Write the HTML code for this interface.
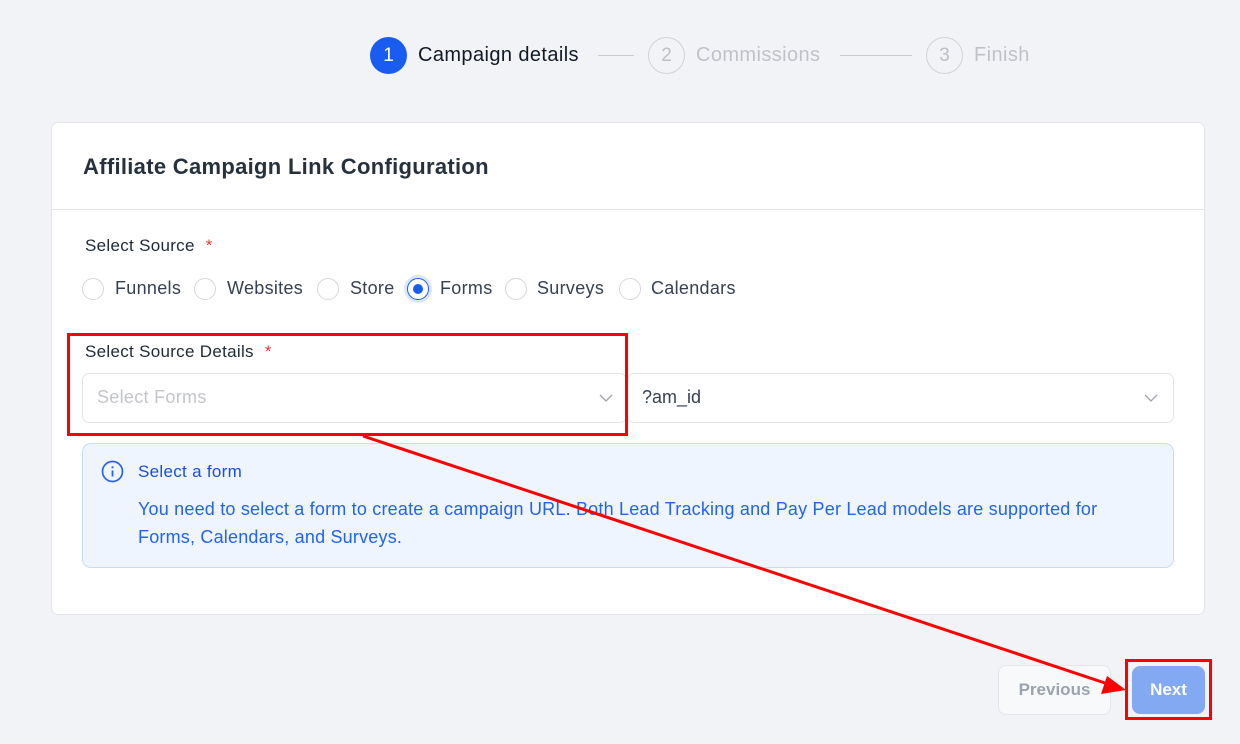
<!DOCTYPE html>
<html><head><style>
*{margin:0;padding:0;box-sizing:border-box}
body{width:1240px;height:744px;background:#f2f3f7;font-family:"Liberation Sans",sans-serif;position:relative;overflow:hidden}
.a{position:absolute;white-space:nowrap}
.circ{position:absolute;width:37px;height:37px;border-radius:50%;display:flex;align-items:center;justify-content:center;font-size:19px}
.rad{position:absolute;width:22px;height:22px;border-radius:50%;border:1px solid #d4d7dd;background:#fff;top:278px}
.rt{position:absolute;top:278px;font-size:18px;color:#374151;letter-spacing:0.3px}
.st{font-size:20px;letter-spacing:0.4px}
</style></head><body>
<div class="circ" style="left:370px;top:37px;background:#1a5cf0;color:#fff">1</div>
<div class="a st" style="left:418px;top:44px;color:#111827">Campaign details</div>
<div class="a" style="left:598px;top:55px;width:36px;height:1px;background:#c8cbd0"></div>
<div class="circ" style="left:648px;top:37px;border:1.5px solid #d0d2d6;color:#bdbfc4">2</div>
<div class="a st" style="left:696px;top:44px;color:#c0c2c7">Commissions</div>
<div class="a" style="left:840px;top:55px;width:72px;height:1px;background:#c8cbd0"></div>
<div class="circ" style="left:926px;top:37px;border:1.5px solid #d0d2d6;color:#bdbfc4">3</div>
<div class="a st" style="left:974px;top:44px;color:#c0c2c7">Finish</div>

<div class="a" style="left:51px;top:122px;width:1154px;height:493px;background:#fff;border:1px solid #e3e5e9;border-radius:7px"></div>
<div class="a" style="left:52px;top:209px;width:1152px;height:1px;background:#e5e7eb"></div>
<div class="a" style="left:83px;top:154px;font-size:22px;font-weight:bold;color:#27313d;letter-spacing:0.3px">Affiliate Campaign Link Configuration</div>

<div class="a" style="left:85px;top:236px;font-size:17px;color:#1f2937;letter-spacing:0.3px">Select Source <span style="color:#e53935;margin-left:6px">*</span></div>
<div class="rad" style="left:82px"></div><div class="rt" style="left:115px">Funnels</div>
<div class="rad" style="left:194px"></div><div class="rt" style="left:227px">Websites</div>
<div class="rad" style="left:317px"></div><div class="rt" style="left:350px">Store</div>
<div class="rad" style="left:407px;border:1.5px solid #1a5cf0;box-shadow:0 0 0 3px #dbe7fd"><div style="position:absolute;left:4.5px;top:4.5px;width:10px;height:10px;border-radius:50%;background:#1a5cf0"></div></div><div class="rt" style="left:440px">Forms</div>
<div class="rad" style="left:505px"></div><div class="rt" style="left:537px">Surveys</div>
<div class="rad" style="left:619px"></div><div class="rt" style="left:651px">Calendars</div>

<div class="a" style="left:85px;top:342px;font-size:17px;color:#1f2937;letter-spacing:0.3px">Select Source Details <span style="color:#e53935;margin-left:6px">*</span></div>
<div class="a" style="left:82px;top:373px;width:545px;height:50px;border:1px solid #e3e5e9;border-radius:7px;background:#fff"></div>
<div class="a" style="left:97px;top:387px;font-size:18px;color:#c3c5ca;letter-spacing:0.3px">Select Forms</div>
<svg class="a" style="left:598px;top:392px" width="16" height="12"><path d="M2 3l6 6 6-6" fill="none" stroke="#9ca3af" stroke-width="1.3"/></svg>
<div class="a" style="left:627px;top:373px;width:547px;height:50px;border:1px solid #e3e5e9;border-radius:7px;background:#fff"></div>
<div class="a" style="left:642px;top:387px;font-size:18px;color:#374151">?am_id</div>
<svg class="a" style="left:1143px;top:392px" width="16" height="12"><path d="M2 3l6 6 6-6" fill="none" stroke="#9ca3af" stroke-width="1.3"/></svg>

<div class="a" style="left:82px;top:443px;width:1092px;height:125px;background:#eef5fe;border:1px solid #c6dcfb;border-radius:9px"></div>
<svg class="a" style="left:101px;top:460px" width="23" height="23"><circle cx="11.5" cy="11.5" r="10" fill="none" stroke="#2563eb" stroke-width="1.7"/><path d="M11.5 10.5v6" stroke="#2563eb" stroke-width="1.8"/><circle cx="11.5" cy="7.3" r="1.1" fill="#2563eb"/></svg>
<div class="a" style="left:138px;top:462px;font-size:17px;color:#1d4ed8;letter-spacing:0.3px">Select a form</div>
<div class="a" style="left:138px;top:495px;font-size:18px;color:#2563eb;line-height:28px;letter-spacing:0.2px">You need to select a form to create a campaign URL. Both Lead Tracking and Pay Per Lead models are supported for<br>Forms, Calendars, and Surveys.</div>

<div class="a" style="left:998px;top:665px;width:113px;height:50px;border:1px solid #e3e5e9;border-radius:8px;background:#f8f9fb;font-size:17px;color:#9ca3af;font-weight:bold;display:flex;align-items:center;justify-content:center">Previous</div>
<div class="a" style="left:1132px;top:666px;width:73px;height:48px;border-radius:8px;background:#84a9f3;font-size:17px;color:#fff;font-weight:bold;display:flex;align-items:center;justify-content:center">Next</div>

<div class="a" style="left:67px;top:333px;width:561px;height:103px;border:3px solid #f00"></div>
<div class="a" style="left:1125px;top:659px;width:87px;height:61px;border:3px solid #f00"></div>
<svg class="a" style="left:0;top:0" width="1240" height="744"><line x1="363" y1="436" x2="1108" y2="684" stroke="#f00" stroke-width="3"/><polygon points="1126,690 1101,694 1107,676" fill="#f00"/></svg>
</body></html>
